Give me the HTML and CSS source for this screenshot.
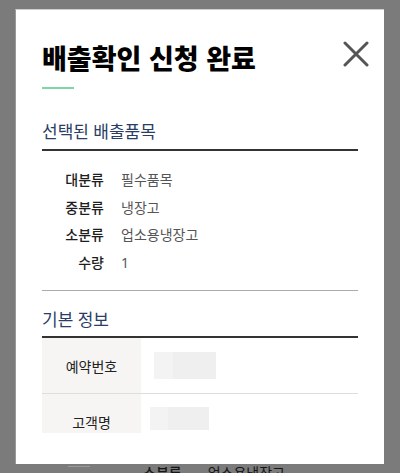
FILE: index.html
```html
<!DOCTYPE html>
<html lang="ko">
<head>
<meta charset="utf-8">
<title>배출확인 신청 완료</title>
<link rel="stylesheet" href="styles.css">
</head>
<body>
<div class="modal">
  <button class="close" aria-label="닫기">
    <svg viewBox="0 0 26 26" width="26" height="26"><path d="M2 2 L24 24 M24 2 L2 24" stroke="#555" stroke-width="3" stroke-linecap="round" fill="none"/></svg>
  </button>
  <h1 class="title">배출확인 신청 완료</h1>
  <div class="accent"></div>
  <div class="body">
    <h2 class="sec-title">선택된 배출품목</h2>
    <dl class="items">
      <dt>대분류</dt><dd>필수품목</dd>
      <dt>중분류</dt><dd>냉장고</dd>
      <dt>소분류</dt><dd>업소용냉장고</dd>
      <dt>수량</dt><dd>1</dd>
    </dl>
    <h2 class="sec-title sec-title2">기본 정보</h2>
    <div class="table">
      <div class="trow">
        <div class="th">예약번호</div>
        <div class="td"><span class="ph ph-a"></span></div>
      </div>
      <div class="trow">
        <div class="th">고객명</div>
        <div class="td"><span class="ph ph-b"></span></div>
      </div>
    </div>
  </div>
</div>
<div class="behind">
  <span class="bg-box"></span>
  <span class="bg-label">소분류</span>
  <span class="bg-value">업소용냉장고</span>
</div>
</body>
</html>
```
FILE: styles.css
```css
html, body {
  margin: 0;
  padding: 0;
}
body {
  width: 400px;
  height: 473px;
  overflow: hidden;
  background: #7b7b7b;
  font-family: "Noto Sans", "Noto Sans CJK KR", sans-serif;
}
.modal {
  position: relative;
  box-sizing: border-box;
  width: 369px;
  height: 455px;
  margin: 9px 0 0 15px;
  background: #fff;
  border-top: 1px solid #cfcfcf;
  border-left: 1px solid #9a9a9a;
  padding: 31px 26px 31px 26px;
  display: flex;
  flex-direction: column;
}
.close {
  position: absolute;
  top: 31px;
  right: 15px;
  width: 26px;
  height: 26px;
  padding: 0;
  margin: 0;
  border: 0;
  background: none;
  display: flex;
}
.title {
  margin: 0;
  font-family: "Noto Sans CJK KR", sans-serif;
  font-size: 27px;
  line-height: 34px;
  font-weight: 900;
  color: #000;
}
.accent {
  width: 32px;
  height: 2px;
  margin-top: 12px;
  background: #7fd4aa;
}
.body {
  flex: 1;
  overflow: hidden;
}
.sec-title {
  margin: 31px 0 0;
  padding-bottom: 5px;
  border-bottom: 2px solid #333;
  font-size: 17px;
  line-height: 24px;
  font-weight: 400;
  color: #2b3d66;
}
.sec-title2 {
  margin-top: 17px;
  padding-bottom: 4px;
}
.items {
  margin: 15px 0 0;
  padding: 0 0 14px;
  border-bottom: 1px solid #ababab;
  display: grid;
  grid-template-columns: 62px 1fr;
  column-gap: 17px;
  font-size: 14px;
  line-height: 27.5px;
}
.items dt {
  text-align: right;
  color: #1e1e1e;
  font-weight: 500;
}
.items dd {
  margin: 0;
  color: #555;
}
.table {
  display: flex;
  flex-direction: column;
}
.trow {
  display: flex;
  height: 55px;
  border-bottom: 1px solid #dedede;
}
.th {
  width: 99px;
  background: #f6f5f3;
  display: flex;
  align-items: center;
  justify-content: center;
  font-size: 14px;
  color: #222;
}
.td {
  flex: 1;
  display: flex;
  align-items: center;
}
.ph {
  display: block;
  background: linear-gradient(90deg, #f3f3f3 0 30%, #efefef 30% 100%);
}
.ph-a {
  width: 62px;
  height: 27px;
  margin-left: 13px;
}
.ph-b {
  width: 59px;
  height: 23px;
  margin-left: 9px;
  margin-top: -6px;
}
.behind {
  display: flex;
  align-items: flex-start;
  height: 9px;
  overflow: hidden;
  padding-left: 68px;
  font-size: 14px;
  line-height: 20px;
  color: #161616;
}
.bg-box {
  width: 22px;
  height: 2px;
  border-bottom: 1px solid #9a9a9a;
  margin-right: 53px;
}
.bg-label {
  margin-top: -1px;
  font-weight: 500;
}
.bg-value {
  margin-top: -1px;
  margin-left: 26px;
}
```
